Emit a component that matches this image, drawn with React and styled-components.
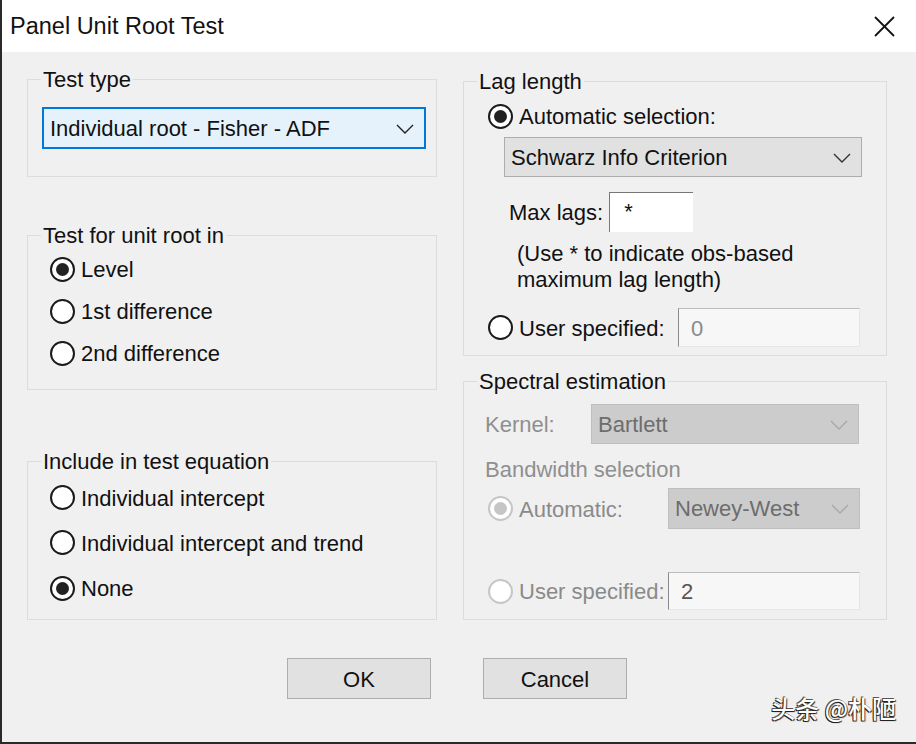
import React from 'react'
import styled, { createGlobalStyle } from 'styled-components'

const GlobalStyle = createGlobalStyle`
  html, body {
    margin: 0;
    padding: 0;
    background: #f0f0f0;
    overflow: hidden;
  }
  * {
    box-sizing: border-box;
  }
`

const FONT = `"Liberation Sans", Arial, sans-serif`

const Window = styled.div`
  position: relative;
  width: 916px;
  height: 744px;
  background: #f0f0f0;
  border-left: 2px solid #2a2a2a;
  border-bottom: 2px solid #2a2a2a;
  font-family: ${FONT};
  font-size: 22px;
  color: #111;
`

const TitleBar = styled.div`
  height: 52px;
  background: #fff;
  display: flex;
  align-items: center;
  justify-content: space-between;
  padding: 0 21px 0 8px;
`

const Title = styled.div`
  font-size: 23.5px;
  color: #111;
`

const Body = styled.div`
  display: grid;
  grid-template-columns: 410px 424px;
  column-gap: 26px;
  padding-left: 25px;
`

const Column = styled.div`
  display: flex;
  flex-direction: column;
`

const GroupBox = styled.div`
  position: relative;
  margin-top: ${({ $top }) => $top}px;
  height: ${({ $height }) => $height}px;
  border: 1px solid #dcdcdc;
  padding-top: ${({ $pad }) => $pad || 0}px;
  padding-left: ${({ $left }) => $left || 0}px;
  display: flex;
  flex-direction: column;
`

const Legend = styled.span`
  position: absolute;
  top: -12px;
  left: 13px;
  padding: 0 2px;
  line-height: 24px;
  background: #f0f0f0;
  color: #111;
`

const Select = styled.div`
  display: flex;
  align-items: center;
  justify-content: space-between;
  width: ${({ $w }) => $w}px;
  height: ${({ $h }) => $h}px;
  margin-top: ${({ $mt }) => $mt || 0}px;
  margin-left: ${({ $ml }) => $ml || 0}px;
  padding: 1px 10px 0 6px;
  ${({ $variant }) =>
    $variant === 'focus'
      ? `
    background: #e5f1fb;
    border: 2px solid #0078d7;
    color: #111;
  `
      : $variant === 'disabled'
      ? `
    background: #cccccc;
    border: 1px solid #bfbfbf;
    color: #6d6d6d;
  `
      : `
    background: #e1e1e1;
    border: 1px solid #adadad;
    color: #111;
  `}
`

const Chevron = ({ color }) => (
  <svg width="18" height="10" viewBox="0 0 18 10">
    <polyline points="1,1 9,9 17,1" fill="none" stroke={color} strokeWidth="1.4" />
  </svg>
)

const CloseIcon = () => (
  <svg width="21" height="21" viewBox="0 0 21 21">
    <line x1="1" y1="1" x2="20" y2="20" stroke="#111" strokeWidth="1.8" />
    <line x1="20" y1="1" x2="1" y2="20" stroke="#111" strokeWidth="1.8" />
  </svg>
)

const OptionRow = styled.div`
  display: flex;
  align-items: center;
  height: ${({ $h }) => $h || 42}px;
  margin-top: ${({ $mt }) => $mt || 0}px;
  margin-left: ${({ $ml }) => $ml || 0}px;
`

const RadioLabel = styled.label`
  display: flex;
  align-items: center;
  gap: 6px;
  width: ${({ $w }) => ($w ? `${$w}px` : 'auto')};
  flex-shrink: 0;
  color: ${({ $disabled }) => ($disabled ? '#8a8a8a' : '#111')};
`

const RadioCircle = styled.span`
  width: 25px;
  height: 25px;
  border-radius: 50%;
  background: #fff;
  border: 2px solid ${({ $disabled }) => ($disabled ? '#c6c6c6' : '#1a1a1a')};
  display: flex;
  align-items: center;
  justify-content: center;
  flex-shrink: 0;

  &::after {
    content: '';
    display: ${({ $checked }) => ($checked ? 'block' : 'none')};
    width: 13px;
    height: 13px;
    border-radius: 50%;
    background: ${({ $disabled }) => ($disabled ? '#c6c6c6' : '#222')};
  }
`

const Radio = ({ label, checked, disabled, width }) => (
  <RadioLabel $disabled={disabled} $w={width}>
    <RadioCircle $checked={checked} $disabled={disabled} />
    <span style={{ paddingTop: 2 }}>{label}</span>
  </RadioLabel>
)

const TextField = styled.div`
  display: flex;
  align-items: ${({ $top }) => ($top ? 'flex-start' : 'center')};
  width: ${({ $w }) => $w}px;
  height: ${({ $h }) => $h}px;
  padding: ${({ $top }) => ($top ? '6px 0 0 14px' : '2px 0 0 12px')};
  ${({ $variant }) =>
    $variant === 'white'
      ? `
    background: #fff;
    border-top: 1px solid #777;
    border-left: 1px solid #777;
    color: #111;
  `
      : `
    background: #f7f7f7;
    border-top: 1px solid #bdbdbd;
    border-left: 1px solid #8a8a8a;
    border-right: 1px solid #e6e6e6;
    border-bottom: 1px solid #e6e6e6;
    color: ${$variant === 'faded' ? '#8a8a8a' : '#555'};
  `}
`

const FieldLabel = styled.span`
  width: ${({ $w }) => ($w ? `${$w}px` : 'auto')};
  flex-shrink: 0;
  padding-top: 2px;
  color: ${({ $disabled }) => ($disabled ? '#8f8f8f' : '#111')};
  margin-left: ${({ $ml }) => $ml || 0}px;
`

const Note = styled.div`
  margin: 9px 0 0 29px;
  line-height: 26px;
  color: #111;
`

const SubHeading = styled.div`
  margin-top: 13px;
  line-height: 26px;
  color: #8f8f8f;
`

const Footer = styled.div`
  grid-column: 1 / -1;
  display: flex;
  gap: 52px;
  margin-top: 38px;
  padding-left: 260px;
`

const Button = styled.button`
  width: 144px;
  height: 41px;
  background: #e1e1e1;
  border: 1px solid #adadad;
  font-family: ${FONT};
  font-size: 22px;
  color: #111;
  padding: 2px 0 0;
`

const Watermark = styled.div`
  position: absolute;
  right: 20px;
  bottom: 17px;
  font-family: "Noto Sans CJK SC", sans-serif;
  font-size: 24px;
  font-weight: 500;
  color: #fff;
  text-shadow: -1px 1px 0 #222, 1px 1px 1px #333, -1px -1px 0 #555;
`

export default function App() {
  return (
    <>
      <GlobalStyle />
      <Window>
        <TitleBar>
          <Title>Panel Unit Root Test</Title>
          <CloseIcon />
        </TitleBar>
        <Body>
          <Column>
            <GroupBox $top={27} $height={98} $pad={27} $left={14}>
              <Legend>Test type</Legend>
              <Select $variant="focus" $w={384} $h={42}>
                Individual root - Fisher - ADF
                <Chevron color="#222" />
              </Select>
            </GroupBox>

            <GroupBox $top={58} $height={155} $pad={12} $left={22}>
              <Legend>Test for unit root in</Legend>
              <OptionRow><Radio label="Level" checked /></OptionRow>
              <OptionRow><Radio label="1st difference" /></OptionRow>
              <OptionRow><Radio label="2nd difference" /></OptionRow>
            </GroupBox>

            <GroupBox $top={71} $height={159} $pad={13} $left={22}>
              <Legend>Include in test equation</Legend>
              <OptionRow $h={45}><Radio label="Individual intercept" /></OptionRow>
              <OptionRow $h={45}><Radio label="Individual intercept and trend" /></OptionRow>
              <OptionRow $h={46}><Radio label="None" checked /></OptionRow>
            </GroupBox>
          </Column>

          <Column>
            <GroupBox $top={29} $height={275} $pad={14} $left={24}>
              <Legend>Lag length</Legend>
              <OptionRow $h={40}>
                <Radio label="Automatic selection:" checked />
              </OptionRow>
              <Select $variant="normal" $w={358} $h={40} $mt={1} $ml={16}>
                Schwarz Info Criterion
                <Chevron color="#333" />
              </Select>
              <OptionRow $h={40} $mt={15}>
                <FieldLabel $ml={21}>Max lags:&nbsp;</FieldLabel>
                <TextField $variant="white" $w={84} $h={40} $top>*</TextField>
              </OptionRow>
              <Note>
                (Use * to indicate obs-based<br />
                maximum lag length)
              </Note>
              <OptionRow $h={39} $mt={15}>
                <Radio label="User specified:" width={190} />
                <TextField $variant="faded" $w={182} $h={39}>0</TextField>
              </OptionRow>
            </GroupBox>

            <GroupBox $top={25} $height={239} $pad={22} $left={21}>
              <Legend>Spectral estimation</Legend>
              <OptionRow $h={40}>
                <FieldLabel $disabled $w={106}>Kernel:</FieldLabel>
                <Select $variant="disabled" $w={268} $h={40}>
                  Bartlett
                  <Chevron color="#a8a8a8" />
                </Select>
              </OptionRow>
              <SubHeading>Bandwidth selection</SubHeading>
              <OptionRow $h={41} $mt={5} $ml={3}>
                <Radio label="Automatic:" checked disabled width={180} />
                <Select $variant="disabled" $w={192} $h={41}>
                  Newey-West
                  <Chevron color="#a8a8a8" />
                </Select>
              </OptionRow>
              <OptionRow $h={38} $mt={43} $ml={3}>
                <Radio label="User specified:" disabled width={180} />
                <TextField $variant="disabled" $w={192} $h={38}>2</TextField>
              </OptionRow>
            </GroupBox>
          </Column>

          <Footer>
            <Button>OK</Button>
            <Button>Cancel</Button>
          </Footer>
        </Body>
        <Watermark>头条 @朴陋</Watermark>
      </Window>
    </>
  )
}
